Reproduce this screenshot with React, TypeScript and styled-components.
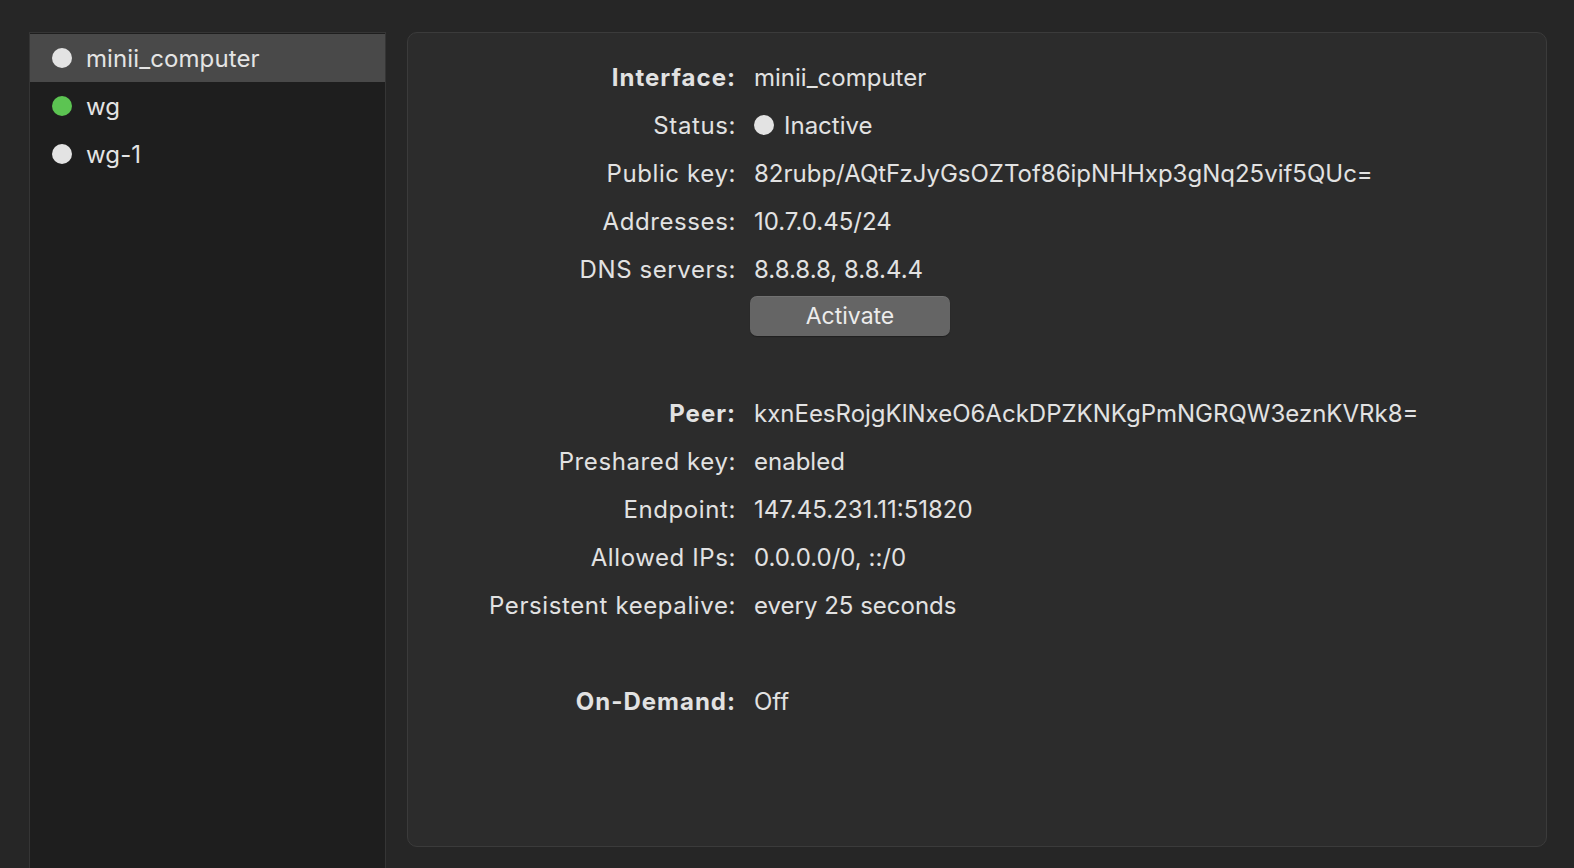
import React from 'react';
import styled, { createGlobalStyle } from 'styled-components';

const GlobalStyle = createGlobalStyle`
  html, body {
    margin: 0;
    padding: 0;
    background: #262626;
    overflow: hidden;
  }
  body {
    font-family: Inter, "Noto Sans", "Liberation Sans", sans-serif;
    color: #dedede;
  }
`;

const Window = styled.div`
  display: flex;
  align-items: flex-start;
  gap: 21px;
  padding: 32px 27px 0 29px;
  height: 100vh;
  box-sizing: border-box;
`;

const Sidebar = styled.nav`
  width: 357px;
  flex-shrink: 0;
  height: calc(100vh - 20px);
  box-sizing: border-box;
  background: #1e1e1e;
  border: 1px solid #353535;
  border-bottom: none;
  padding-top: 1px;
`;

const TunnelRow = styled.div<{ $selected?: boolean }>`
  height: 48px;
  display: flex;
  align-items: center;
  gap: 14px;
  padding-left: 22px;
  background: ${p => (p.$selected ? '#494949' : 'transparent')};
  font-size: 24px;
  letter-spacing: 0.1px;
  color: #e4e4e4;
`;

const Dot = styled.span<{ $color: string }>`
  width: 20px;
  height: 20px;
  border-radius: 50%;
  background: ${p => p.$color};
  flex-shrink: 0;
`;

const Panel = styled.section`
  flex: 1;
  height: 815px;
  box-sizing: border-box;
  background: #2c2c2c;
  border: 1px solid #3b3b3b;
  border-radius: 10px;
  padding-top: 20px;
`;

const Grid = styled.div`
  display: grid;
  grid-template-columns: 328px 1fr;
  column-gap: 18px;
  grid-auto-rows: 48px;
  align-items: center;
  font-size: 24px;
`;

const Label = styled.div<{ $bold?: boolean }>`
  text-align: right;
  font-weight: ${p => (p.$bold ? 700 : 400)};
  letter-spacing: ${p => (p.$bold ? '1px' : '0.6px')};
  color: #e2e2e2;
  white-space: nowrap;
`;

const Value = styled.div`
  display: flex;
  align-items: center;
  gap: 10px;
  color: #e2e2e2;
  white-space: nowrap;
`;

const Spacer = styled.div<{ $h: number }>`
  grid-column: 1 / -1;
  height: ${p => p.$h}px;
`;

const ButtonCell = styled.div`
  grid-column: 2;
  align-self: start;
  padding-top: 3px;
  margin-left: -4px;
`;

const Button = styled.button`
  width: 200px;
  height: 40px;
  border: none;
  border-radius: 7px;
  background: #656565;
  color: #ececec;
  font-family: inherit;
  font-size: 23px;
  box-shadow: 0 1px 1px rgba(0, 0, 0, 0.3), inset 0 1px 0 rgba(255, 255, 255, 0.08);
`;

type Field = { label: string; value: string; bold?: boolean };

const iface: Field[] = [
  { label: 'Public key:', value: '82rubp/AQtFzJyGsOZTof86ipNHHxp3gNq25vif5QUc=' },
  { label: 'Addresses:', value: '10.7.0.45/24' },
  { label: 'DNS servers:', value: '8.8.8.8, 8.8.4.4' },
];

const peer: Field[] = [
  { label: 'Peer:', value: 'kxnEesRojgKlNxeO6AckDPZKNKgPmNGRQW3eznKVRk8=', bold: true },
  { label: 'Preshared key:', value: 'enabled' },
  { label: 'Endpoint:', value: '147.45.231.11:51820' },
  { label: 'Allowed IPs:', value: '0.0.0.0/0, ::/0' },
  { label: 'Persistent keepalive:', value: 'every 25 seconds' },
];

const tunnels = [
  { name: 'minii_computer', color: '#e3e3e3', selected: true },
  { name: 'wg', color: '#5cc452' },
  { name: 'wg-1', color: '#e3e3e3' },
];

const renderFields = (fields: Field[]) =>
  fields.map(f => (
    <React.Fragment key={f.label}>
      <Label $bold={f.bold}>{f.label}</Label>
      <Value>{f.value}</Value>
    </React.Fragment>
  ));

const App: React.FC = () => {
  return (
    <>
      <GlobalStyle />
      <Window>
        <Sidebar>
          {tunnels.map(t => (
            <TunnelRow key={t.name} $selected={t.selected}>
              <Dot $color={t.color} />
              {t.name}
            </TunnelRow>
          ))}
        </Sidebar>

        <Panel>
          <Grid>
            <Label $bold>Interface:</Label>
            <Value>minii_computer</Value>
            <Label>Status:</Label>
            <Value>
              <Dot $color="#e3e3e3" />
              Inactive
            </Value>
            {renderFields(iface)}
            <ButtonCell>
              <Button>Activate</Button>
            </ButtonCell>
            <Spacer $h={48} />
            {renderFields(peer)}
            <Spacer $h={48} />
            <Label $bold>On-Demand:</Label>
            <Value>Off</Value>
          </Grid>
        </Panel>
      </Window>
    </>
  );
};

export default App;
